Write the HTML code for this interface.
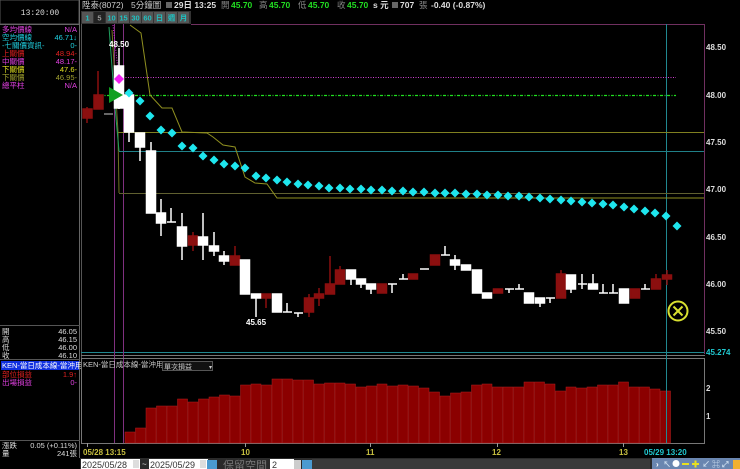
<!DOCTYPE html>
<html><head><meta charset="utf-8"><style>
html,body{margin:0;padding:0;background:#000;width:740px;height:469px;overflow:hidden}
svg{display:block}
text{font-family:"Liberation Sans","Noto Sans CJK TC",sans-serif}
.m{font-family:"Liberation Mono","Noto Sans CJK TC",monospace}
</style></head><body>
<svg width="740" height="469" viewBox="0 0 740 469" xmlns="http://www.w3.org/2000/svg">
<defs>
<polygon id="d" points="0,-4.5 4.5,0 0,4.5 -4.5,0" fill="#1ee6ee"/>
</defs>
<rect width="740" height="469" fill="#000"/>
<!-- left panel -->
<rect x="0" y="0" width="79" height="24" fill="#000" stroke="#555" stroke-width="1"/>
<text x="40" y="15" fill="#ddd" font-size="8" text-anchor="middle" class="m">13:20:00</text>
<line x1="79.5" y1="0" x2="79.5" y2="458" stroke="#666"/>
<line x1="0" y1="24.5" x2="80" y2="24.5" stroke="#666"/>
<g font-size="7.5" class="m">
<text x="2" y="32" fill="#e040e0">多均價線</text><text x="77" y="32" fill="#e040e0" text-anchor="end">N/A</text>
<text x="2" y="40" fill="#20d0e0">空均價線</text><text x="77" y="40" fill="#20d0e0" text-anchor="end">46.71↓</text>
<text x="2" y="48" fill="#20d0e0">-七關價資訊-</text><text x="77" y="48" fill="#20d0e0" text-anchor="end">0-</text>
<text x="2" y="56" fill="#e02020">上關價</text><text x="77" y="56" fill="#e02020" text-anchor="end">48.94-</text>
<text x="2" y="64" fill="#e040e0">中關價</text><text x="77" y="64" fill="#e040e0" text-anchor="end">48.17-</text>
<text x="2" y="72" fill="#e0e020">下關價</text><text x="77" y="72" fill="#e0e020" text-anchor="end">47.6-</text>
<text x="2" y="80" fill="#a0a030">下關價</text><text x="77" y="80" fill="#a0a030" text-anchor="end">46.95-</text>
<text x="2" y="88" fill="#e040e0">總平柱</text><text x="77" y="88" fill="#e040e0" text-anchor="end">N/A</text>
<text x="2" y="334" fill="#ddd">開</text><text x="77" y="334" fill="#ddd" text-anchor="end">46.05</text>
<text x="2" y="342" fill="#ddd">高</text><text x="77" y="342" fill="#ddd" text-anchor="end">46.15</text>
<text x="2" y="350" fill="#ddd">低</text><text x="77" y="350" fill="#ddd" text-anchor="end">46.00</text>
<text x="2" y="358" fill="#ddd">收</text><text x="77" y="358" fill="#ddd" text-anchor="end">46.10</text>
<rect x="1" y="361" width="78" height="9" fill="#1030e0"/>
<text x="2" y="368" fill="#fff">KEN-當日成本線-當沖用</text>
<text x="2" y="377" fill="#e02020">部位損益</text><text x="77" y="377" fill="#e02020" text-anchor="end">1.9↑</text>
<text x="2" y="385" fill="#e040e0">出場損益</text><text x="77" y="385" fill="#e040e0" text-anchor="end">0-</text>
<text x="2" y="448" fill="#ddd">漲跌</text><text x="77" y="448" fill="#ddd" text-anchor="end">0.05 (+0.11%)</text>
<text x="2" y="456" fill="#ddd">量</text><text x="77" y="456" fill="#ddd" text-anchor="end">241張</text>
</g>
<line x1="0" y1="325.5" x2="80" y2="325.5" stroke="#555"/>
<line x1="0" y1="359.5" x2="80" y2="359.5" stroke="#555"/>
<line x1="0" y1="440.5" x2="80" y2="440.5" stroke="#555"/>
<!-- top bar -->
<g font-size="8.5" font-weight="bold">
<text x="82" y="8" fill="#ccc" font-weight="normal">陞泰(8072)</text>
<text x="131" y="8" fill="#ccc" font-weight="normal">5分鐘圖</text>
<rect x="166" y="2" width="6" height="6" fill="#666"/>
<text x="174" y="8" fill="#ddd">29日 13:25</text>
<text x="221" y="8" fill="#888" font-weight="normal">開</text><text x="231" y="8" fill="#22dd22">45.70</text>
<text x="259" y="8" fill="#888" font-weight="normal">高</text><text x="269" y="8" fill="#22dd22">45.70</text>
<text x="298" y="8" fill="#888" font-weight="normal">低</text><text x="308" y="8" fill="#22dd22">45.70</text>
<text x="337" y="8" fill="#888" font-weight="normal">收</text><text x="347" y="8" fill="#22dd22">45.70</text>
<text x="373" y="8" fill="#ddd">s 元</text>
<rect x="392" y="2" width="6" height="6" fill="#666"/>
<text x="400" y="8" fill="#ddd">707</text><text x="419" y="8" fill="#888" font-weight="normal">張</text>
<text x="431" y="8" fill="#ddd">-0.40 (-0.87%)</text>
</g>
<!-- buttons -->
<rect x="81" y="11" width="110" height="13" fill="#333"/>
<g font-size="7.5" fill="#20c0c0" font-weight="bold" text-anchor="middle">
<rect x="82" y="12" width="11" height="11" fill="#555"/><text x="87.5" y="20.5">1</text>
<rect x="94" y="12" width="11" height="11" fill="#222"/><text x="99.5" y="20.5" fill="#999">5</text>
<rect x="106" y="12" width="11" height="11" fill="#555"/><text x="111.5" y="20.5">10</text>
<rect x="118" y="12" width="11" height="11" fill="#555"/><text x="123.5" y="20.5">15</text>
<rect x="130" y="12" width="11" height="11" fill="#555"/><text x="135.5" y="20.5">30</text>
<rect x="142" y="12" width="11" height="11" fill="#555"/><text x="147.5" y="20.5">60</text>
<rect x="154" y="12" width="11" height="11" fill="#555"/><text x="159.5" y="20.5">日</text>
<rect x="166" y="12" width="11" height="11" fill="#555"/><text x="171.5" y="20.5">週</text>
<rect x="178" y="12" width="11" height="11" fill="#555"/><text x="183.5" y="20.5">月</text>
</g>
<!-- main chart frame -->
<line x1="191" y1="24.5" x2="704" y2="24.5" stroke="#703060"/>
<line x1="704.5" y1="24" x2="704.5" y2="354" stroke="#703060"/>
<line x1="81.5" y1="24" x2="81.5" y2="444" stroke="#555"/>
<line x1="81" y1="355.5" x2="705" y2="355.5" stroke="#777"/>
<line x1="81" y1="352.5" x2="704" y2="352.5" stroke="#208890"/>
<!-- price axis -->
<g font-size="8" fill="#ddd" font-weight="bold">
<text x="706" y="50">48.50</text><text x="706" y="98">48.00</text><text x="706" y="145">47.50</text>
<text x="706" y="192">47.00</text><text x="706" y="240">46.50</text><text x="706" y="287">46.00</text>
<text x="706" y="334">45.50</text><text x="706" y="355" fill="#20c8d0">45.274</text>
</g>
<!-- verticals -->
<line x1="114.5" y1="24" x2="114.5" y2="443" stroke="#803080"/>
<line x1="123.5" y1="24" x2="123.5" y2="443" stroke="#803080"/>
<line x1="666.5" y1="24" x2="666.5" y2="443" stroke="#208890"/>
<!-- horizontal levels -->
<line x1="118" y1="77.5" x2="676" y2="77.5" stroke="#d040d0" stroke-dasharray="1,1.5"/>
<line x1="100" y1="95.5" x2="676" y2="95.5" stroke="#20e020" stroke-width="1.2" stroke-dasharray="3,1.5,1,1.5"/>
<line x1="118" y1="132.5" x2="704" y2="132.5" stroke="#808020"/>
<line x1="119" y1="151.5" x2="704" y2="151.5" stroke="#208088"/>
<line x1="119" y1="193.5" x2="704" y2="193.5" stroke="#606030"/>
<polyline fill="none" stroke="#909020" points="130,25 141,33 150,95 162,108 172,108 182,132 207,133 213,137 223,145 235,147 245,177 255,183 267,184 277,198 704,198"/>
<polyline fill="none" stroke="#707020" points="112,30 118,132 119,193"/>
<polyline fill="none" stroke="#20a060" points="109,27 115,107 119,151"/>
<line x1="113" y1="25" x2="119" y2="79" stroke="#e020e0" stroke-dasharray="1,1.5"/>
<!-- candles -->
<g stroke-width="1.5">
<g stroke="#8b0f0f" fill="#8b0f0f">
<line x1="87" y1="107" x2="87" y2="123"/><rect x="83" y="109" width="9" height="9"/>
<line x1="98" y1="71" x2="98" y2="109"/><rect x="94" y="95" width="9" height="14"/>
<line x1="193" y1="232" x2="193" y2="251"/><rect x="188.5" y="236" width="9" height="9"/>
<line x1="235" y1="246" x2="235" y2="265"/><rect x="230.5" y="256" width="9" height="9"/>
<line x1="266" y1="294" x2="266" y2="308"/><rect x="261.5" y="294" width="9" height="4"/>
<line x1="309" y1="294" x2="309" y2="317"/><rect x="304.5" y="298" width="9" height="14"/>
<line x1="319" y1="288" x2="319" y2="306"/><rect x="314.5" y="294" width="9" height="4"/>
<line x1="330" y1="256" x2="330" y2="294"/><rect x="325.5" y="284" width="9" height="10"/>
<line x1="340" y1="266" x2="340" y2="284"/><rect x="335.5" y="270" width="9" height="14"/>
<rect x="377.5" y="284" width="9" height="9"/>
<rect x="408.5" y="274" width="9" height="5"/>
<rect x="430.5" y="255" width="9" height="10"/>
<rect x="493.5" y="289" width="9" height="4"/>
<line x1="561" y1="270" x2="561" y2="298"/><rect x="556.5" y="274" width="9" height="24"/>
<rect x="630.5" y="289" width="9" height="9"/>
<line x1="656" y1="274" x2="656" y2="289"/><rect x="651.5" y="279" width="9" height="10"/>
<line x1="667" y1="270" x2="667" y2="285"/><rect x="662.5" y="275" width="9" height="4"/>
</g>
<g stroke="#fff" fill="#fff">
<line x1="119" y1="48" x2="119" y2="109"/><rect x="114.5" y="66" width="9" height="42"/>
<line x1="129" y1="95" x2="129" y2="142"/><rect x="124.5" y="95" width="9" height="37"/>
<line x1="140" y1="133" x2="140" y2="161"/><rect x="135.5" y="133" width="9" height="14"/>
<line x1="151" y1="142" x2="151" y2="213"/><rect x="146.5" y="151" width="9" height="62"/>
<line x1="161" y1="199" x2="161" y2="236"/><rect x="156.5" y="213" width="9" height="10"/>
<line x1="171" y1="208" x2="171" y2="222"/><line x1="167" y1="222" x2="176" y2="222"/>
<line x1="182" y1="213" x2="182" y2="260"/><rect x="177.5" y="227" width="9" height="19"/>
<line x1="203" y1="213" x2="203" y2="260"/><rect x="198.5" y="237" width="9" height="8"/>
<line x1="214" y1="232" x2="214" y2="256"/><rect x="209.5" y="246" width="9" height="5"/>
<line x1="224" y1="251" x2="224" y2="265"/><rect x="219.5" y="256" width="9" height="5"/>
<rect x="240.5" y="260" width="9" height="34"/>
<line x1="256" y1="294" x2="256" y2="317"/><rect x="251.5" y="294" width="9" height="4"/>
<rect x="272.5" y="294" width="9" height="18"/>
<line x1="287" y1="303" x2="287" y2="312"/><line x1="283" y1="312" x2="292" y2="312"/>
<line x1="298" y1="313" x2="298" y2="317"/><line x1="294" y1="313" x2="303" y2="313"/>
<line x1="351" y1="270" x2="351" y2="285"/><rect x="346.5" y="270" width="9" height="9"/>
<line x1="361" y1="279" x2="361" y2="288"/><rect x="356.5" y="279" width="9" height="5"/>
<line x1="371" y1="284" x2="371" y2="294"/><rect x="366.5" y="284" width="9" height="5"/>
<line x1="392" y1="284" x2="392" y2="293"/><line x1="388" y1="284" x2="397" y2="284"/>
<line x1="403" y1="274" x2="403" y2="279"/><line x1="399" y1="279" x2="408" y2="279"/>
<line x1="420" y1="269" x2="429" y2="269"/>
<line x1="445" y1="246" x2="445" y2="255"/><line x1="441" y1="255" x2="450" y2="255"/>
<line x1="455" y1="255" x2="455" y2="270"/><rect x="450.5" y="260" width="9" height="5"/>
<rect x="461.5" y="265" width="9" height="5"/>
<rect x="472.5" y="270" width="9" height="23"/>
<rect x="482.5" y="293" width="9" height="5"/>
<line x1="509" y1="289" x2="509" y2="293"/><line x1="505" y1="289" x2="514" y2="289"/>
<line x1="519" y1="284" x2="519" y2="289"/><line x1="515" y1="289" x2="524" y2="289"/>
<rect x="524.5" y="293" width="9" height="10"/>
<line x1="540" y1="298" x2="540" y2="307"/><rect x="535.5" y="298" width="9" height="5"/>
<line x1="550" y1="298" x2="550" y2="303"/><line x1="546" y1="298" x2="555" y2="298"/>
<line x1="571" y1="275" x2="571" y2="293"/><rect x="566.5" y="275" width="9" height="14"/>
<line x1="582" y1="274" x2="582" y2="289"/><line x1="578" y1="284" x2="587" y2="284"/>
<line x1="593" y1="274" x2="593" y2="289"/><rect x="588.5" y="284" width="9" height="5"/>
<line x1="603" y1="284" x2="603" y2="293"/><line x1="599" y1="293" x2="608" y2="293"/>
<line x1="613" y1="284" x2="613" y2="293"/><line x1="609" y1="293" x2="618" y2="293"/>
<rect x="619.5" y="289" width="9" height="14"/>
<line x1="645" y1="284" x2="645" y2="289"/><line x1="641" y1="289" x2="650" y2="289"/>
</g>
<line x1="104" y1="114" x2="113" y2="114" stroke="#888"/>
</g>
<!-- triangle & magenta diamond -->
<polygon points="109,87 109,103 123,95" fill="#10a020"/>
<polygon points="119,74 124,79 119,84 114,79" fill="#f020f0"/>
<text x="109" y="47" font-size="8" fill="#fff" font-weight="bold">48.50</text>
<text x="246" y="325" font-size="8" fill="#fff" font-weight="bold">45.65</text>
<!-- diamonds -->
<g>
<use href="#d" x="129" y="93"/><use href="#d" x="140" y="101"/><use href="#d" x="150" y="116"/><use href="#d" x="161" y="130"/><use href="#d" x="172" y="133"/><use href="#d" x="182" y="146"/><use href="#d" x="193" y="148"/><use href="#d" x="203" y="156"/><use href="#d" x="214" y="160"/><use href="#d" x="224" y="164"/><use href="#d" x="235" y="166"/><use href="#d" x="245" y="168"/><use href="#d" x="256" y="176"/><use href="#d" x="266" y="178"/><use href="#d" x="277" y="180"/><use href="#d" x="287" y="182"/><use href="#d" x="298" y="184"/><use href="#d" x="308" y="185"/><use href="#d" x="319" y="186"/><use href="#d" x="329" y="188"/><use href="#d" x="340" y="188"/><use href="#d" x="350" y="189"/><use href="#d" x="361" y="189"/><use href="#d" x="371" y="190"/><use href="#d" x="382" y="190"/><use href="#d" x="392" y="191"/><use href="#d" x="403" y="191"/><use href="#d" x="413" y="192"/><use href="#d" x="424" y="192"/><use href="#d" x="435" y="193"/><use href="#d" x="445" y="193"/><use href="#d" x="455" y="193"/><use href="#d" x="466" y="194"/><use href="#d" x="477" y="194"/><use href="#d" x="487" y="195"/><use href="#d" x="498" y="195"/><use href="#d" x="508" y="196"/><use href="#d" x="519" y="196"/><use href="#d" x="529" y="197"/><use href="#d" x="540" y="198"/><use href="#d" x="550" y="199"/><use href="#d" x="561" y="200"/><use href="#d" x="571" y="201"/><use href="#d" x="582" y="202"/><use href="#d" x="592" y="203"/><use href="#d" x="603" y="204"/><use href="#d" x="613" y="205"/><use href="#d" x="624" y="207"/><use href="#d" x="634" y="209"/><use href="#d" x="645" y="211"/><use href="#d" x="655" y="213"/><use href="#d" x="666" y="216"/><use href="#d" x="677" y="226"/>
</g>
<!-- circled X -->
<circle cx="678" cy="311" r="9.5" fill="none" stroke="#d8e030" stroke-width="2"/>
<path d="M673.5 306.5 L682.5 315.5 M682.5 306.5 L673.5 315.5" stroke="#d8e030" stroke-width="2"/>
<!-- indicator panel -->
<rect x="81.5" y="358.5" width="623" height="85" fill="none" stroke="#777"/>
<text x="83" y="367" font-size="7.5" fill="#ccc">KEN-當日成本線-當沖用</text>
<rect x="162.5" y="361.5" width="50" height="9" fill="#111" stroke="#555"/>
<text x="164" y="369" font-size="7" fill="#ccc">單次損益</text>
<text x="209" y="369" font-size="6" fill="#ccc">▾</text>
<text x="706" y="391" font-size="8" fill="#ddd" font-weight="bold">2</text>
<text x="706" y="419" font-size="8" fill="#ddd" font-weight="bold">1</text>
<g fill="#8b0000" stroke="#b02020" stroke-width="0.5">
<rect x="125" y="432" width="10" height="11"/><rect x="135.5" y="428" width="10" height="15"/><rect x="146" y="408" width="10" height="35"/><rect x="156.5" y="406" width="10" height="37"/><rect x="167" y="406" width="10" height="37"/><rect x="177.5" y="399" width="10" height="44"/><rect x="188" y="402" width="10" height="41"/><rect x="198.5" y="399" width="10" height="44"/><rect x="209" y="397" width="10" height="46"/><rect x="219.5" y="395" width="10" height="48"/><rect x="230" y="396" width="10" height="47"/><rect x="240.5" y="385" width="10" height="58"/><rect x="251" y="384" width="10" height="59"/><rect x="261.5" y="385" width="10" height="58"/><rect x="272" y="379" width="10" height="64"/><rect x="282.5" y="379" width="10" height="64"/>
<rect x="293" y="380" width="10" height="63"/><rect x="303.5" y="380" width="10" height="63"/><rect x="314" y="384" width="10" height="59"/><rect x="324.5" y="383" width="10" height="60"/><rect x="335" y="383" width="10" height="60"/><rect x="345.5" y="384" width="10" height="59"/><rect x="356" y="387" width="10" height="56"/><rect x="366.5" y="386" width="10" height="57"/><rect x="377" y="384" width="10" height="59"/><rect x="387.5" y="386" width="10" height="57"/><rect x="398" y="385" width="10" height="58"/><rect x="408.5" y="386" width="10" height="57"/><rect x="419" y="388" width="10" height="55"/><rect x="429.5" y="392" width="10" height="51"/>
<rect x="440" y="396" width="10" height="47"/><rect x="450.5" y="393" width="10" height="50"/><rect x="461" y="392" width="10" height="51"/><rect x="471.5" y="385" width="10" height="58"/><rect x="482" y="384" width="10" height="59"/><rect x="492.5" y="387" width="10" height="56"/><rect x="503" y="387" width="10" height="56"/><rect x="513.5" y="387" width="10" height="56"/><rect x="524" y="382" width="10" height="61"/><rect x="534.5" y="382" width="10" height="61"/><rect x="545" y="384" width="10" height="59"/><rect x="555.5" y="391" width="10" height="52"/><rect x="566" y="387" width="10" height="56"/><rect x="576.5" y="388" width="10" height="55"/><rect x="587" y="387" width="10" height="56"/><rect x="597.5" y="385" width="10" height="58"/><rect x="608" y="385" width="10" height="58"/><rect x="618.5" y="382" width="10" height="61"/><rect x="629" y="387" width="10" height="56"/><rect x="639.5" y="387" width="10" height="56"/><rect x="650" y="389" width="10" height="54"/><rect x="660.5" y="391" width="10" height="52"/>
</g>
<line x1="666.5" y1="358" x2="666.5" y2="443" stroke="#208890"/>
<!-- time axis -->
<g stroke="#999"><line x1="87.5" y1="443" x2="87.5" y2="447"/><line x1="245.5" y1="443" x2="245.5" y2="447"/><line x1="370.5" y1="443" x2="370.5" y2="447"/><line x1="497.5" y1="443" x2="497.5" y2="447"/><line x1="623.5" y1="443" x2="623.5" y2="447"/></g>
<g font-size="8" font-weight="bold">
<text x="83" y="455" fill="#c8c040">05/28 13:15</text>
<text x="241" y="455" fill="#c8c040">10</text>
<text x="366" y="455" fill="#c8c040">11</text>
<text x="492" y="455" fill="#c8c040">12</text>
<text x="619" y="455" fill="#c8c040">13</text>
<text x="644" y="455" fill="#20c8d0">05/29 13:20</text>
</g>
<!-- bottom row -->
<rect x="80" y="458" width="660" height="11" fill="#2a2a2a"/>
<rect x="81" y="459" width="59" height="10" fill="#fff"/>
<text x="82" y="468" font-size="9" fill="#333">2025/05/28</text>
<rect x="133" y="460" width="6" height="8" fill="#ddd"/>
<text x="142" y="467" font-size="8" fill="#ddd">~</text>
<rect x="149" y="459" width="59" height="10" fill="#fff"/>
<text x="150" y="468" font-size="9" fill="#333">2025/05/29</text>
<rect x="200" y="460" width="6" height="8" fill="#ddd"/>
<rect x="207" y="460" width="10" height="9" fill="#4a9ad0"/>
<text x="223" y="469" font-size="11" fill="#777">保留空間</text>
<rect x="270" y="459" width="24" height="10" fill="#fff"/>
<text x="272" y="468" font-size="9" fill="#333">2</text>
<rect x="294" y="460" width="7" height="9" fill="#ccc"/>
<rect x="302" y="460" width="10" height="9" fill="#4a9ad0"/>
<rect x="312" y="459" width="338" height="10" fill="#3a3a3a"/>
<rect x="652" y="458" width="88" height="11" fill="#6a86b0"/>
<g font-size="8" fill="#fff" font-weight="bold">
<text x="656" y="467">›</text>
<text x="663" y="467" fill="#cde">↖</text>
<circle cx="676" cy="463.5" r="3.5" fill="#fff"/>
<rect x="682" y="463" width="7" height="2" fill="#e8e020"/>
<rect x="692" y="463" width="7" height="2" fill="#e8e020"/><rect x="694.5" y="460.5" width="2" height="7" fill="#e8e020"/>
<text x="702" y="467" fill="#cde">↙</text>
<text x="712" y="467" fill="#cde">⌘</text>
<text x="722" y="467" fill="#cde">⤢</text>
<rect x="733" y="460" width="7" height="9" fill="#f0b030"/>
</g>
</svg>
</body></html>
